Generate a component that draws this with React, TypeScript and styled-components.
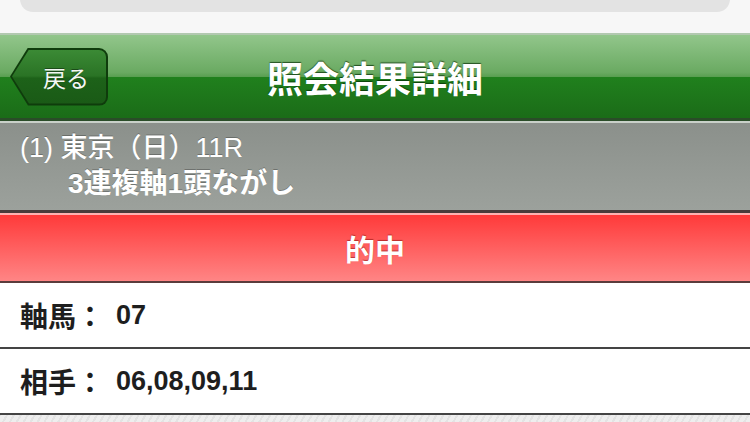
import React from "react";
import styled, { createGlobalStyle } from "styled-components";

const GlobalStyle = createGlobalStyle`
  html, body { margin: 0; padding: 0; }
  body {
    width: 750px;
    height: 422px;
    overflow: hidden;
    background: #f7f7f7;
    font-family: "Liberation Sans", "Noto Sans CJK JP", sans-serif;
  }
`;

const Page = styled.div`
  display: flex;
  flex-direction: column;
  width: 750px;
  height: 422px;
  overflow: hidden;
`;

const TopArea = styled.div`
  flex: none;
  height: 33px;
  background: #f7f7f7;
  padding: 0 20px;
  box-sizing: border-box;
`;

const SearchBox = styled.div`
  height: 26px;
  margin-top: -14px;
  background: #e3e3e3;
  border-radius: 14px;
`;

const Header = styled.header`
  flex: none;
  display: grid;
  grid-template-columns: 1fr auto 1fr;
  align-items: center;
  height: 83px;
  border-top: 2px solid #b2c9b0;
  border-bottom: 3px solid #2a4c28;
  background: linear-gradient(
    to bottom,
    #92c68b 0%,
    #6aaa62 45%,
    #5a9f52 50%,
    #20801d 50.5%,
    #1b6c18 100%
  );
  padding: 0 10px;
`;

const BackOuter = styled.button`
  justify-self: start;
  width: 98px;
  height: 58px;
  padding: 2px;
  border: none;
  background: #0f3c0c;
  border-radius: 0 9px 9px 0;
  clip-path: polygon(18px 0, 100% 0, 100% 100%, 18px 100%, 0 50%);
  display: flex;
  cursor: pointer;
`;

const BackInner = styled.span`
  flex: 1;
  display: flex;
  align-items: center;
  justify-content: center;
  padding-left: 14px;
  border-radius: 0 7px 7px 0;
  clip-path: polygon(17px 0, 100% 0, 100% 100%, 17px 100%, 0 50%);
  background: linear-gradient(to bottom, #3b8a35 0%, #2a7325 48%, #1d6219 52%, #1a5a16 100%);
  color: #f4f8f4;
  font-family: "Noto Sans CJK JP", sans-serif;
  font-size: 23px;
  font-weight: 400;
  text-shadow: 0 -1px 0 rgba(0, 0, 0, 0.4);
`;

const Title = styled.h1`
  margin: 0;
  color: #ffffff;
  font-family: "Noto Sans CJK JP", sans-serif;
  font-size: 36px;
  font-weight: 700;
  line-height: 1;
  text-shadow: 0 -1px 1px rgba(0, 40, 0, 0.7);
`;

const Info = styled.section`
  flex: none;
  display: flex;
  flex-direction: column;
  justify-content: center;
  height: 92px;
  box-sizing: border-box;
  padding: 0 20px 2px;
  border-top: 2px solid #c9d0c9;
  border-bottom: 3px solid #4a3c3c;
  background: linear-gradient(to bottom, #8b908b, #9ca19c);
  color: #ffffff;
  text-shadow: 0 -1px 0 rgba(0, 0, 0, 0.25);
`;

const InfoLine = styled.div<{ $indent?: number; $bold?: boolean }>`
  height: 36px;
  line-height: 36px;
  padding-left: ${(p) => p.$indent ?? 0}px;
  font-family: "Liberation Sans", "Noto Sans CJK JP", sans-serif;
  font-size: ${(p) => (p.$bold ? 28 : 27)}px;
  font-weight: ${(p) => (p.$bold ? 700 : 500)};
  white-space: nowrap;
`;

const Result = styled.div`
  flex: none;
  display: flex;
  align-items: center;
  justify-content: center;
  height: 66px;
  border-top: 2px solid #ffb2b2;
  border-bottom: 2px solid #5a3c3c;
  background: linear-gradient(to bottom, #ff3a3a, #ff8585);
  color: #ffffff;
  font-family: "Noto Sans CJK JP", sans-serif;
  font-size: 30px;
  font-weight: 700;
  text-shadow: 0 -1px 1px rgba(120, 0, 0, 0.5);
`;

const Row = styled.div`
  flex: none;
  display: flex;
  align-items: center;
  gap: 12px;
  height: 64px;
  padding: 0 20px;
  background: #ffffff;
  border-bottom: 2px solid #444444;
  color: #1e1e1e;
  font-family: "Liberation Sans", "Noto Sans CJK JP", sans-serif;
  font-size: 27px;
  font-weight: 700;
`;

const Label = styled.span`
  font-family: "Noto Sans CJK JP", sans-serif;
  font-size: 28px;
`;

const Footer = styled.div`
  flex: 1;
  background: repeating-linear-gradient(
    -60deg,
    #eeeeee 0px,
    #eeeeee 4px,
    #e3e3e3 4px,
    #e3e3e3 6px
  );
`;

export default function App() {
  return (
    <>
      <GlobalStyle />
      <Page>
        <TopArea>
          <SearchBox />
        </TopArea>
        <Header>
          <BackOuter>
            <BackInner>戻る</BackInner>
          </BackOuter>
          <Title>照会結果詳細</Title>
          <span />
        </Header>
        <Info>
          <InfoLine>(1) 東京（日）11R</InfoLine>
          <InfoLine $indent={48} $bold>3連複軸1頭ながし</InfoLine>
        </Info>
        <Result>的中</Result>
        <Row>
          <Label>軸馬：</Label>
          <span>07</span>
        </Row>
        <Row>
          <Label>相手：</Label>
          <span>06,08,09,11</span>
        </Row>
        <Footer />
      </Page>
    </>
  );
}
